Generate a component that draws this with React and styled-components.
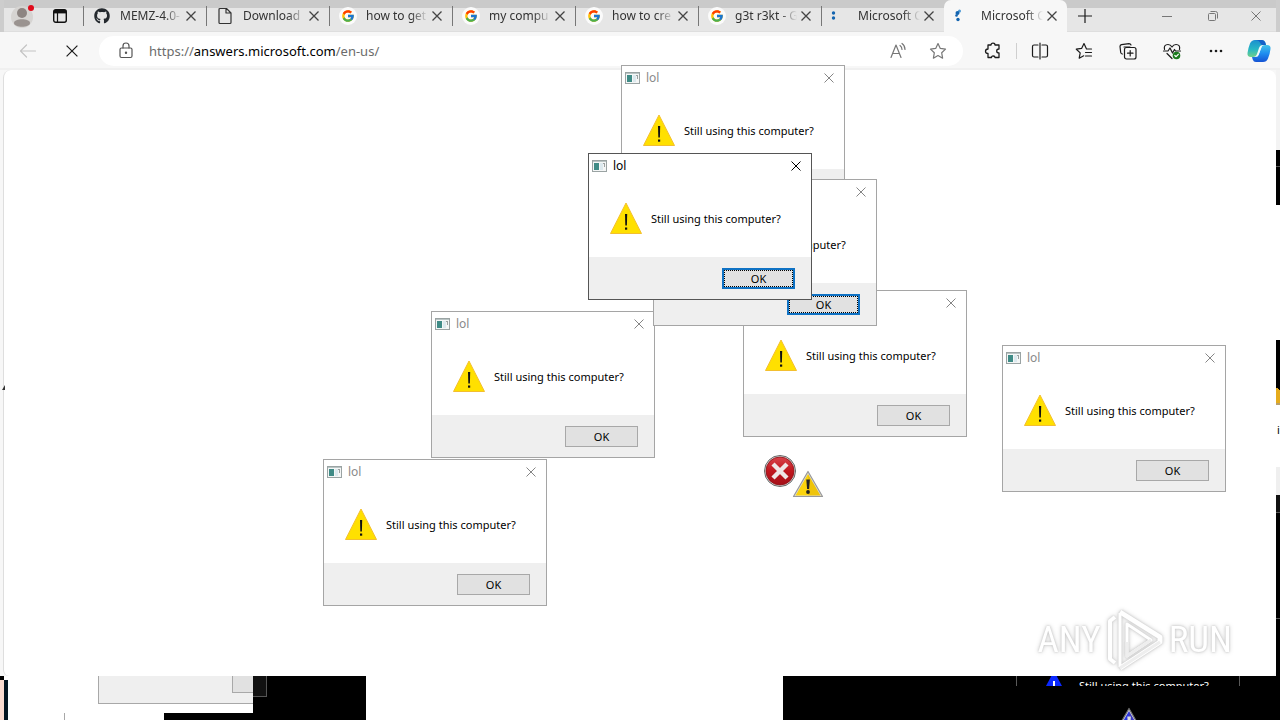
import React from "react";
import styled, { createGlobalStyle, css } from "styled-components";
import { FaGithub } from "react-icons/fa";
import { FcGoogle } from "react-icons/fc";

const GlobalStyle = createGlobalStyle`
  * { box-sizing: border-box; }
  body {
    margin: 0;
    font-family: "Noto Sans", "Open Sans", sans-serif;
    font-size: 12px;
    color: #000;
    background: #fff;
    overflow: hidden;
  }
  button, input { font: inherit; color: inherit; }
  svg { display: block; flex: none; }
`;

const Desktop = styled.div`
  position: relative;
  display: flex;
  flex-direction: column;
  min-height: 100vh;
  overflow: hidden;
`;

const IconButton = styled.button`
  display: grid;
  place-items: center;
  flex: none;
  width: ${(p) => p.$w || 44}px;
  height: ${(p) => p.$h || 28}px;
  padding: 0;
  border: 0;
  background: none;
  color: ${(p) => p.$color || "#1b1b1b"};
`;

/* ---------- Tab strip ---------- */

const TabStrip = styled.header`
  display: flex;
  height: 32px;
  background: linear-gradient(#cacaca 8px, #e6e6e6 8px, #e6e6e6 31px, #dedede 31px);
  border-left: 4px solid #cdcdcd;
  border-right: 4px solid #cdcdcd;
`;

const StripStart = styled.div`
  display: flex;
  align-items: center;
  width: 79px;
  gap: 2px;
`;

const Tabs = styled.nav`
  display: flex;
  flex: 0 1 984px;
  min-width: 0;
`;

const Tab = styled.div`
  display: flex;
  align-items: center;
  flex: 1 1 123px;
  min-width: 0;
  height: 32px;
  padding: 0 10px;
  color: #333;
  ${(p) =>
    p.$active
      ? css`
          background: #f7f7f7;
          border-radius: 7px 7px 0 0;
        `
      : css`
          background: linear-gradient(#777, #777) 0 6px / 1px 20px no-repeat;
        `}
`;

const TabTitle = styled.span`
  flex: 1;
  min-width: 0;
  margin: 0 4px 0 9px;
  overflow: hidden;
  white-space: nowrap;
  line-height: 20px;
  mask-image: linear-gradient(90deg, #000 72%, transparent 100%);
`;

const WindowControls = styled.div`
  display: flex;
  align-items: center;
  margin-left: auto;
`;

/* ---------- Toolbar ---------- */

const Toolbar = styled.div`
  display: flex;
  align-items: center;
  height: 38px;
  padding: 2px 0 0 6px;
  background: #f7f7f7;
  border-bottom: 2px solid #f0f0f0;
`;

const AddressBar = styled.form`
  display: flex;
  align-items: center;
  flex: 1;
  min-width: 0;
  height: 30px;
  margin: 0 8px 0 5px;
  padding: 0 5px 0 17px;
  border-radius: 15px;
  background: #fff;
`;

const Url = styled.a`
  flex: 1;
  margin-left: 13px;
  font-size: 13px;
  line-height: 20px;
  color: #6b6b6b;
  text-decoration: none;
  white-space: nowrap;
`;

const Host = styled.span`
  color: #000;
`;

const Separator = styled.span`
  width: 1px;
  height: 16px;
  margin: 0 1px;
  background: #cfcfcf;
`;

/* ---------- Page ---------- */

const PageRow = styled.div`
  display: flex;
  flex: 1;
  background: #f7f7f7;
`;

const Page = styled.main`
  flex: 1;
  margin-left: 3px;
  border-left: 1px solid #dedede;
  border-radius: 8px 8px 6px 6px;
  background: #fff;
`;

const EdgeStrip = styled.div`
  display: flex;
  flex-direction: column;
  width: 4px;
  overflow: hidden;
`;

const EdgePiece = styled.span`
  flex: none;
  height: ${(p) => p.$h}px;
  padding-left: 1px;
  font-size: 11px;
  line-height: 50px;
  background: ${(p) => p.$bg};
  border-bottom: ${(p) => (p.$line ? "1px solid #555" : "0")};
`;

/* ---------- Message boxes ---------- */

const Box = styled.section`
  position: absolute;
  left: ${(p) => p.$x}px;
  top: ${(p) => p.$y}px;
  display: flex;
  flex-direction: column;
  width: 224px;
  height: 147px;
  border: 1px solid ${(p) => (p.$active ? "#555" : "#a5a5a5")};
  background: #fff;
`;

const TitleBar = styled.div`
  display: flex;
  align-items: center;
  gap: 6px;
  height: 24px;
  padding: 0 10px 0 3px;
  color: ${(p) => (p.$active ? "#000" : "#8a8a8a")};
`;

const TitleText = styled.h2`
  flex: 1;
  margin: 0;
  font-size: 12px;
  font-weight: 400;
  line-height: 16px;
`;

const Message = styled.div`
  display: flex;
  align-items: center;
  gap: 9px;
  flex: 1;
  padding: 2px 0 0 21px;
`;

const MessageText = styled.p`
  margin: 0;
  font-size: 11px;
  line-height: 16px;
  white-space: nowrap;
`;

const Footer = styled.div`
  display: flex;
  justify-content: flex-end;
  align-items: center;
  height: 42px;
  padding: 0 16px;
  background: #efefef;
`;

const OkButton = styled.button`
  width: 73px;
  height: 21px;
  padding: 1px 0 0;
  border: ${(p) => (p.$focused ? "2px solid #0f72c4" : "1px solid #a8a8a8")};
  outline: ${(p) => (p.$focused ? "1px dotted #000" : "0")};
  outline-offset: -3px;
  background: #e1e1e1;
  font-size: 11px;
  line-height: 16px;
`;

const StrayIcon = styled.span`
  position: absolute;
  left: ${(p) => p.$x}px;
  top: ${(p) => p.$y}px;
`;

const Watermark = styled.div`
  position: absolute;
  right: 48px;
  bottom: 47px;
  display: flex;
  align-items: center;
  gap: 5px;
  font-family: "Liberation Sans Narrow", "Roboto Condensed", "Roboto", sans-serif;
  font-size: 37px;
  line-height: 66px;
  color: #fff;
  filter: drop-shadow(0 0 1px #c4c4c4) drop-shadow(0 0 2px #d8d8d8);
`;

/* ---------- Leftover screen pieces under the browser ---------- */

const Remnants = styled.footer`
  position: relative;
  display: flex;
  height: 44px;
  background: #fff;
`;

const Piece = styled.span`
  position: absolute;
  left: ${(p) => p.$x}px;
  top: ${(p) => p.$y || 0}px;
  width: ${(p) => p.$w}px;
  height: ${(p) => p.$h}px;
  background: ${(p) => p.$bg};
  border: 0 solid ${(p) => p.$edge || "#a8a8a8"};
  border-width: ${(p) => p.$border || "0"};
`;

const BlackSpan = styled.div`
  position: relative;
  flex: 1;
  margin-left: 783px;
  background: #000;
`;

const InvertedBox = styled.div`
  position: absolute;
  right: 40px;
  top: 0;
  display: flex;
  align-items: flex-start;
  gap: 9px;
  width: 224px;
  height: 10px;
  padding-left: 21px;
  border: 0 solid #5a5a5a;
  border-width: 0 1px;
  overflow: hidden;
  color: #fff;
`;

const InvertedText = styled(MessageText)`
  line-height: 20px;
`;

const InvertedIcon = styled.span`
  position: absolute;
  right: 135px;
  bottom: 0;
  height: 13px;
  overflow: hidden;
`;

/* ---------- Drawings ---------- */

const Cross = ({ size = 10, width = 1.3 }) => (
  <svg width={size} height={size} viewBox="0 0 10 10" fill="none" stroke="currentColor" strokeWidth={width}>
    <path d="M.5.5l9 9M9.5.5l-9 9" />
  </svg>
);

const Line = ({ size = 20, children, w = 1.2 }) => (
  <svg width={size} height={size} viewBox="0 0 20 20" fill="none" stroke="currentColor" strokeWidth={w} strokeLinejoin="round" strokeLinecap="round">
    {children}
  </svg>
);

const Avatar = () => (
  <svg width="36" height="32" viewBox="0 0 36 32">
    <circle cx="18" cy="17" r="11" fill="#d6d4d2" />
    <circle cx="18" cy="13" r="5" fill="#8d8582" />
    <path d="M10 23c0-5 16-5 16 0 0 5-16 5-16 0z" fill="#9a9390" />
    <circle cx="27" cy="8" r="3" fill="#e00b1c" />
  </svg>
);

const TabActions = () => (
  <svg width="14" height="14" viewBox="0 0 14 14">
    <rect x=".7" y=".7" width="12.6" height="12.6" rx="2" fill="none" stroke="#111" strokeWidth="1.4" />
    <path d="M1 1h12v3.4H1z" fill="#111" />
    <path d="M4.5 4v9" stroke="#111" strokeWidth="1.2" />
  </svg>
);

const DocIcon = () => (
  <svg width="18" height="18" viewBox="0 0 18 18" fill="none" stroke="#333" strokeWidth="1.2" strokeLinejoin="round">
    <path d="M4 1.500h6.500L15 6v9.500q0 1-1 1H4q-1 0-1-1v-13q0-1 1-1zM10 1.500V6h5" />
  </svg>
);

const GithubIcon = () => (
  <svg width="18" height="18" viewBox="0 0 18 18">
    <FaGithub x="1" y="1" size={16} color="#24292e" />
  </svg>
);

const GoogleIcon = () => (
  <svg width="18" height="18" viewBox="0 0 18 18">
    <circle cx="9" cy="9" r="9" fill="#fbfbfb" />
    <FcGoogle x="2" y="2" size={14} />
  </svg>
);

const DotsIcon = ({ active }) => (
  <svg width="18" height="18" viewBox="0 0 18 18" fill="#1364b0">
    {active ? (
      <>
        <circle cx="5.500" cy="4" r="1.500" fill="#4b98d4" />
        <circle cx="3.500" cy="6" r="2" />
        <circle cx="2.500" cy="8.500" r="1.300" />
        <circle cx="4" cy="12.500" r="1.700" />
      </>
    ) : (
      <>
        <circle cx="2.500" cy="6" r="1.700" />
        <circle cx="2.500" cy="11" r="1.700" />
      </>
    )}
  </svg>
);

const Copilot = () => (
  <svg width="24" height="24" viewBox="0 0 24 24">
    <defs>
      <linearGradient id="cpA" x1="0" y1="0" x2="0" y2="1">
        <stop offset="0" stopColor="#1b8fd0" />
        <stop offset=".55" stopColor="#27b7c4" />
        <stop offset="1" stopColor="#6fd08a" />
      </linearGradient>
      <linearGradient id="cpB" x1="0" y1="0" x2="0" y2="1">
        <stop offset="0" stopColor="#42c3e8" />
        <stop offset=".5" stopColor="#1f8df0" />
        <stop offset="1" stopColor="#1553d4" />
      </linearGradient>
    </defs>
    <path d="M8 1h7q2.500 0 3.300 2.500L19 6h-3q-3 0-4 3l-2 6q-1 3-4 3H4q-4 0-3.500-4 .5-4.500 2.500-9.500Q4.500 1 8 1z" fill="url(#cpA)" />
    <path d="M16 23H9q-2.500 0-3.300-2.500L5 18h3q3 0 4-3l2-6q1-3 4-3h2q4 0 3.500 4-.5 4.500-2.500 9.500Q19.500 23 16 23z" fill="url(#cpB)" />
    <path d="M14.500 8.500L11.500 16q-.8 2-2.500 2 1-.8 1.600-2.600l2-6q.6-1.800 2.200-2.600z" fill="#eafaff" />
    <path d="M8 1h7q2.500 0 3.300 2.500L19 6h-4q-1.500-1-2-2.500Q12 1 8 1z" fill="#1560c8" />
  </svg>
);

const AppIcon = () => (
  <svg width="15" height="12" viewBox="0 0 15 12">
    <rect x=".5" y=".5" width="14" height="11" fill="#f4f6f6" stroke="#9aa3a3" />
    <path d="M1 1.500h13" stroke="#b9c4c4" />
    <rect x="2" y="3" width="5" height="7" fill="#3f8b86" />
    <rect x="8" y="3" width="3" height="7" fill="#dce9ee" />
    <path d="M11 3.500h2M12.500 3v4" stroke="#9ba1a1" />
  </svg>
);

const Warning = () => (
  <svg width="32" height="32" viewBox="0 1 32 32">
    <path d="M16 1L31.500 31.500H.5z" fill="#ffe000" stroke="#f3bf2f" strokeLinejoin="round" />
    <path d="M15 12h2.200l-.3 11.500h-1.600z" fill="#111" />
    <rect x="15" y="25.500" width="2.200" height="2.200" fill="#111" />
  </svg>
);

const ErrorIcon = () => (
  <svg width="32" height="32" viewBox="0 0 32 32">
    <defs>
      <linearGradient id="err" x1="0" y1="0" x2="0" y2="1">
        <stop offset="0" stopColor="#d9434a" />
        <stop offset=".5" stopColor="#c0161e" />
        <stop offset="1" stopColor="#a50f18" />
      </linearGradient>
    </defs>
    <circle cx="16" cy="16" r="15.500" fill="#ddd" stroke="#666" />
    <circle cx="16" cy="16" r="14" fill="url(#err)" stroke="#8d1016" strokeWidth=".8" />
    <path d="M9 9l14 14M23 9L9 23" stroke="#efe6e6" strokeWidth="4.400" />
  </svg>
);

const SmallWarning = ({ fill = "#fbd40c", edge = "#999", mark = "#222" }) => (
  <svg width="32" height="28" viewBox="0 0 32 28">
    <path d="M16 1.500L30.500 26.500H1.500z" fill="#ddd" stroke={edge} strokeWidth="1.200" strokeLinejoin="round" />
    <path d="M16 4L28.500 25.500H3.500z" fill={fill} />
    <path d="M16 4L28.500 25.500H16z" fill="#a60" opacity=".14" />
    <path d="M14.300 9.500h3.600l-.8 9.500h-2z" fill={mark} />
    <circle cx="16" cy="22" r="1.900" fill={mark} />
  </svg>
);

const PlayLogo = () => (
  <svg width="58" height="64" viewBox="0 0 58 64" fill="none" strokeLinejoin="round">
    <path d="M14 4L54 29v5L14 60" stroke="#fff" strokeWidth="5" />
    <path d="M14 5v54" stroke="#fff" strokeWidth="3" />
    <path d="M21 16v32l24-16z" stroke="#fff" strokeWidth="3" />
    <path d="M9 9L4 13v38l5 4" stroke="#fff" strokeWidth="4" />
    <path d="M54 34L14 60M21 34v14l24-16" stroke="#eee" strokeWidth="3" />
  </svg>
);

/* ---------- Composition ---------- */

const tabs = [
  { title: "MEMZ-4.0-", icon: <GithubIcon /> },
  { title: "Download", icon: <DocIcon /> },
  { title: "how to get", icon: <GoogleIcon /> },
  { title: "my compu", icon: <GoogleIcon /> },
  { title: "how to cre", icon: <GoogleIcon /> },
  { title: "g3t r3kt - G", icon: <GoogleIcon /> },
  { title: "Microsoft C", icon: <DotsIcon /> },
  { title: "Microsoft C", icon: <DotsIcon active />, active: true },
];

const boxes = [
  { x: 621, y: 65 },
  { x: 743, y: 290 },
  { x: 431, y: 311 },
  { x: 653, y: 179, focused: true },
  { x: 588, y: 153, focused: true, active: true },
  { x: 323, y: 459 },
  { x: 1002, y: 345 },
];

function MessageBox({ x, y, active, focused }) {
  return (
    <Box $x={x} $y={y} $active={active} role="dialog" aria-label="lol">
      <TitleBar $active={active}>
        <AppIcon />
        <TitleText>lol</TitleText>
        <IconButton $w={10} $h={16} $color={active ? "#000" : "#858585"} aria-label="Close">
          <Cross size={10} width={1} />
        </IconButton>
      </TitleBar>
      <Message>
        <Warning />
        <MessageText>Still using this computer?</MessageText>
      </Message>
      <Footer>
        <OkButton $focused={focused}>OK</OkButton>
      </Footer>
    </Box>
  );
}

export default function App() {
  return (
    <>
      <GlobalStyle />
      <Desktop>
        <TabStrip>
          <StripStart>
            <IconButton $w={36} $h={32} aria-label="Profile"><Avatar /></IconButton>
            <IconButton $w={36} $h={32} aria-label="Tab actions"><TabActions /></IconButton>
          </StripStart>
          <Tabs>
            {tabs.map((t, i) => (
              <Tab key={i} $active={t.active}>
                {t.icon}
                <TabTitle>{t.title}</TabTitle>
                <IconButton $w={10} $h={20} $color="#444" aria-label="Close tab"><Cross size={10} /></IconButton>
              </Tab>
            ))}
          </Tabs>
          <IconButton $w={36} $h={32} aria-label="New tab">
            <svg width="14" height="14" viewBox="0 0 14 14" stroke="currentColor" strokeWidth="1.2"><path d="M7 0v14M0 7h14" /></svg>
          </IconButton>
          <WindowControls>
            <IconButton $w={46} $color="#777" aria-label="Minimize">
              <svg width="10" height="10" viewBox="0 0 10 10" stroke="currentColor"><path d="M0 5.500h10" /></svg>
            </IconButton>
            <IconButton $w={46} $color="#777" aria-label="Restore">
              <svg width="10" height="10" viewBox="0 0 10 10" fill="none" stroke="currentColor"><rect x=".5" y="2.500" width="7" height="7" rx="1" /><path d="M2.500.5H7.500q2 0 2 2v5" /></svg>
            </IconButton>
            <IconButton $w={40} $color="#777" aria-label="Close window"><Cross width={1} /></IconButton>
          </WindowControls>
        </TabStrip>

        <Toolbar>
          <IconButton $color="#c4c4c4" aria-label="Back">
            <Line><path d="M17.500 10h-15M8.500 4l-6 6 6 6" /></Line>
          </IconButton>
          <IconButton aria-label="Stop"><Cross size={12} width={1} /></IconButton>
          <AddressBar>
            <IconButton $w={20} $color="#555" type="button" aria-label="Site information">
              <Line><rect x="4" y="7" width="12" height="9.500" rx="1.500" /><path d="M7 7V5q0-3 3-3t3 3v2" /><circle cx="10" cy="11.700" r=".6" fill="currentColor" /></Line>
            </IconButton>
            <Url href="#">https://<Host>answers.microsoft.com</Host>/en-us/</Url>
            <IconButton $w={40} $color="#777" type="button" aria-label="Read aloud">
              <Line><path d="M3 16.500L8 4l5 12.500M4.800 12.500h6.500M12 4.500q2 1.500 2 4M14 2.500q3 2 3 6" /></Line>
            </IconButton>
            <IconButton $w={40} $color="#777" type="button" aria-label="Add to favorites">
              <Line><path d="M10 2.500l2.300 4.900 5.200.7-3.800 3.700.9 5.400L10 14.600l-4.600 2.600.9-5.400L2.500 8.100l5.200-.7z" /></Line>
            </IconButton>
          </AddressBar>
          <IconButton aria-label="Extensions">
            <Line w={1.3}><path d="M5 4h3q0-1.800 2-1.800T12 4h4v4q-2.300 0-2.300 2T16 12v4.500h-4q0-1.500-1.800-1.500T8.500 16.500H5V12.500q-2.500 0-2.500-2.200T5 8z" /></Line>
          </IconButton>
          <Separator />
          <IconButton aria-label="Split screen">
            <Line><path d="M8 4H4Q2.500 4 2.500 5.500v9Q2.500 16 4 16h4M12 4h4q1.500 0 1.500 1.500v9q0 1.500-1.500 1.500h-4M10 2v16" /></Line>
          </IconButton>
          <IconButton aria-label="Favorites">
            <Line><path d="M17.500 8h-5L10 2.500 7.600 7.400l-5.300.8 3.900 3.700-1 5.300 4.500-2.400M11.500 11.500h6M11.500 15h6" /></Line>
          </IconButton>
          <IconButton aria-label="Collections">
            <Line><rect x="6.500" y="6.500" width="11.500" height="11.500" rx="2" /><path d="M12.200 9.500v5.500M9.500 12.200H15M4.500 13Q3 13 2.700 11.500L2 5.500Q2 4 3.500 3.700l7.500-1q1.500 0 2 1.300M12 6H6" /></Line>
          </IconButton>
          <IconButton aria-label="Browser essentials">
            <Line><path d="M2.500 8.500Q1.500 3.500 6 3.500q2.500 0 4 2.500 1.500-2.500 4-2.500 4.500 0 3.500 5M1.500 10H6l2-3 2.500 5 2-3.500 1 1.500h5M5 12.500l5 5" /><circle cx="14.500" cy="14.500" r="3.800" fill="#1b7a1e" stroke="none" /><path d="M12.800 14.500l1.300 1.200 2.200-2.400" stroke="#fff" /></Line>
          </IconButton>
          <IconButton aria-label="Settings and more">
            <svg width="14" height="4" viewBox="0 0 14 4" fill="currentColor"><circle cx="2" cy="2" r="1.300" /><circle cx="7" cy="2" r="1.300" /><circle cx="12" cy="2" r="1.300" /></svg>
          </IconButton>
          <IconButton $w={42} aria-label="Copilot"><Copilot /></IconButton>
        </Toolbar>

        <PageRow>
          <Page />
          <EdgeStrip>
            <EdgePiece $h={80} $bg="#f3f3f3" />
            <EdgePiece $h={17} $bg="#000" $line />
            <EdgePiece $h={38} $bg="#000" />
            <EdgePiece $h={135} $bg="#fff" />
            <EdgePiece $h={45} $bg="#000" />
            <EdgePiece $h={18} $bg="linear-gradient(35deg, #e5ab1c 75%, #000 75%)" />
            <EdgePiece $h={2} $bg="#b9a06a" />
            <EdgePiece $h={62} $bg="#fff">i</EdgePiece>
            <EdgePiece $h={28} $bg="#efefef" />
            <EdgePiece $h={18} $bg="#111" $line />
            <EdgePiece $h={106} $bg="#000" $line />
            <EdgePiece $h={57} $bg="#000" />
          </EdgeStrip>
        </PageRow>

        <Remnants>
          <Piece $x={0} $w={4} $h={4} $bg="#000" />
          <Piece $x={0} $y={4} $w={4} $h={40} $bg="#fbdcd0" />
          <Piece $x={4} $y={4} $w={4} $h={40} $bg="#04141f" />
          <Piece $x={64} $y={37} $w={1} $h={7} $bg="#a8a8a8" />
          <Piece $x={98} $w={155} $h={28} $bg="#efefef" $border="0 0 1px 1px" />
          <Piece $x={232} $w={21} $h={17} $bg="#e1e1e1" $border="0 0 1px 1px" />
          <Piece $x={253} $w={113} $h={44} $bg="#000" />
          <Piece $x={253} $w={14} $h={21} $bg="#111" $edge="#555" $border="0 1px 1px 0" />
          <Piece $x={164} $y={37} $w={89} $h={7} $bg="#000" />
          <BlackSpan>
            <InvertedBox>
              <svg width="32" height="10" viewBox="0 22 32 10">
                <path d="M16 17L24 32H8z" fill="#0a28ff" />
                <path d="M15 27h2v5h-2z" fill="#fff" />
              </svg>
              <InvertedText>Still using this computer?</InvertedText>
            </InvertedBox>
            <InvertedIcon><SmallWarning fill="#2a35e0" edge="#6c6c6c" mark="#ddd" /></InvertedIcon>
          </BlackSpan>
        </Remnants>

        {boxes.map((b, i) => (
          <MessageBox key={i} {...b} />
        ))}
        <StrayIcon $x={764} $y={455}><ErrorIcon /></StrayIcon>
        <StrayIcon $x={792} $y={470}><SmallWarning /></StrayIcon>
        <StrayIcon $x={2} $y={385}>
          <svg width="3" height="6" viewBox="0 0 3 6"><path d="M3 0v5H0z" fill="#333" /></svg>
        </StrayIcon>
        <Watermark>
          <span>ANY</span>
          <PlayLogo />
          <span>RUN</span>
        </Watermark>
      </Desktop>
    </>
  );
}
